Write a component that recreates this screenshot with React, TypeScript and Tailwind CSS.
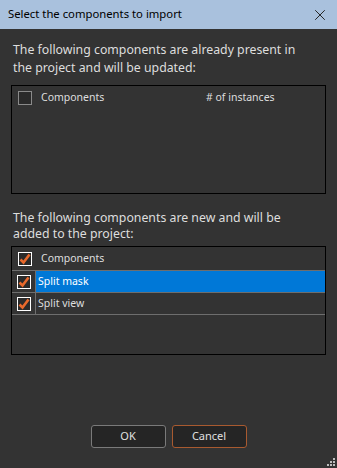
import React from 'react';
import { X } from 'lucide-react';

const Check: React.FC<{ checked?: boolean }> = ({ checked }) => (
  <div className={`w-[14px] h-[14px] border ${checked ? 'border-white' : 'border-[#8a8a8a]'} bg-[#2a2a2a] flex items-center justify-center`}>
    {checked && (
      <svg width="12" height="12" viewBox="0 0 12 12">
        <path d="M1.5 6.5 L4.5 9.5 L10.5 1.5" stroke="#e8692c" strokeWidth="2.6" fill="none" strokeLinejoin="miter" />
      </svg>
    )}
  </div>
);

const rows = ['Split mask', 'Split view'];

export default function App() {
  return (
    <div className="w-[337px] h-[468px] bg-[#333333] flex flex-col text-[#dedede] relative" style={{ fontFamily: '"Noto Sans", "Open Sans", sans-serif' }}>
      <div className="h-[29px] bg-[#a9c1dd] flex items-center justify-between pl-2 pr-[8px] text-black text-[11.3px]">
        <span>Select the components to import</span>
        <X size={18} strokeWidth={1.3} className="text-[#222]" />
      </div>

      <div className="px-[11px] flex flex-col flex-1">
        <p className="mt-[12px] pl-[2px] text-[12.3px] leading-[18px] whitespace-nowrap">
          The following components are already present in
          <br />
          the project and will be updated:
        </p>
        <div className="mt-[8px] h-[109px] border border-black">
          <div className="flex items-center h-[24px] pl-[6px] text-[10.5px]">
            <Check />
            <span className="ml-[9px] w-[165px]">Components</span>
            <span>#&nbsp;of instances</span>
          </div>
        </div>

        <p className="mt-[16px] pl-[2px] text-[12.3px] leading-[16px] whitespace-nowrap">
          The following components are new and will be
          <br />
          added to the project:
        </p>
        <div className="mt-[4px] h-[109px] border border-black text-[10.5px]">
          <div className="flex items-center h-[24px] pl-[6px] border-b border-[#6e6e6e]">
            <Check checked />
            <span className="ml-[9px]">Components</span>
          </div>
          {rows.map((r, i) => (
            <div key={r} className="flex h-[22px] border-b border-[#6e6e6e]">
              <div className="w-[24px] border-r border-[#6e6e6e] flex items-center justify-center">
                <Check checked />
              </div>
              <div className={`flex-1 flex items-center pl-[2px] ${i === 0 ? 'bg-[#0078d7] text-white' : ''}`}>{r}</div>
            </div>
          ))}
        </div>

        <div className="mt-auto mb-[20px] flex justify-center gap-[6px] text-[11px]">
          <button className="w-[75px] h-[23px] rounded-[3px] border border-[#7a7a7a] bg-[#252525] text-[#e0e0e0]">OK</button>
          <button className="w-[75px] h-[23px] rounded-[3px] border border-[#a85a30] bg-[#252525] text-[#e0e0e0]">Cancel</button>
        </div>
      </div>

      <svg className="absolute right-[1px] bottom-[1px]" width="10" height="10" viewBox="0 0 10 10">
        {[[8, 2], [8, 5], [5, 5], [8, 8], [5, 8], [2, 8]].map(([x, y]) => (
          <rect key={`${x}-${y}`} x={x - 1} y={y - 1} width="2" height="2" fill="#bdbdbd" />
        ))}
      </svg>
    </div>
  );
}
